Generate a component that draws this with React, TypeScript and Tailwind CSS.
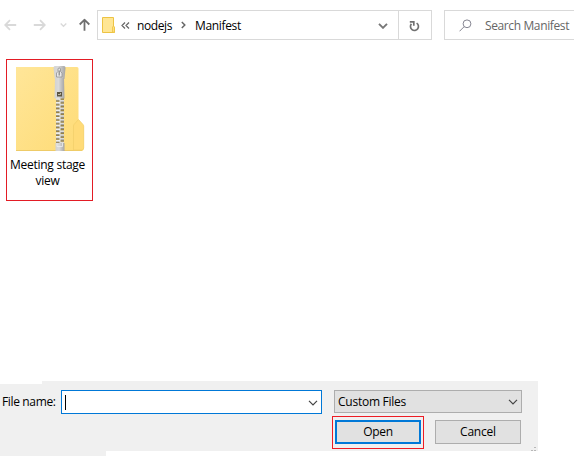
import React from "react";

function Chevron({ className = "", width = 1.2 }: { className?: string; width?: number }) {
  return (
    <svg className={className} width="10" height="6" viewBox="0 0 10 6" fill="none" stroke="currentColor" strokeWidth={width}>
      <path d="M1 .8 5 4.8 9 .8" />
    </svg>
  );
}

function ArrowIcon({ className = "" }: { className?: string }) {
  return (
    <svg className={className} width="13" height="12" viewBox="0 0 13 12" fill="none" stroke="currentColor" strokeWidth="1.8">
      <path d="M12.2 6H1.3M6 1.2 1.2 6 6 10.8" />
    </svg>
  );
}

function SmallFolder() {
  return (
    <svg width="13" height="16" viewBox="0 0 13 16">
      <path d="M.5.5h11v9.2l1 .8v5H.5z" fill="#ffe694" stroke="#edc343" />
      <path d="M10.5 15.2V10l1-1 1 1v5.2z" fill="#ffe07c" stroke="#edc343" strokeWidth=".8" />
    </svg>
  );
}

function ZipFolder() {
  const teeth = Array.from({ length: 12 }, (_, i) => 32 + i * 3.8);
  return (
    <svg className="ml-px" width="70" height="86" viewBox="0 0 70 86">
      <defs>
        <linearGradient id="folder" x1="0" y1="0" x2="1" y2="1">
          <stop offset="0" stopColor="#ffe699" />
          <stop offset="1" stopColor="#fedb75" />
        </linearGradient>
        <linearGradient id="metal" x1="0" x2="1">
          <stop offset="0" stopColor="#d2d2d2" />
          <stop offset=".4" stopColor="#dadada" />
          <stop offset="1" stopColor="#a4a4a4" />
        </linearGradient>
      </defs>
      <path d="M1 1h61q1.500 0 1.500 1.500V54l5 6v23q0 2-2 2H1z" fill="url(#folder)" />
      <path d="M1 84.500h66" stroke="#eecb68" />
      <path d="M58.500 84V60q0-1 .8-1.800L63.500 53.500l4.500 5q.7.8.7 1.800V82q0 2-2 2z" fill="#ffdb78" stroke="#f3cf6b" strokeWidth=".8" />
      <path d="M41 31h8v48h-8z" fill="#9a8344" />
      {teeth.map((y) => (
        <g key={y}>
          <path d={`M41 ${y}h4.500v2.300h-4.500z`} fill="#ededeb" />
          <path d={`M41 ${y + 1.8}h3.500v.8h-3.500z`} fill="#8d8a82" />
          <path d={`M44.500 ${y + 1.9}h4.500v2.300h-4.500z`} fill="#dcdcda" />
          <path d={`M45.500 ${y + 3.6}h3.500v.8h-3.500z`} fill="#817e76" />
        </g>
      ))}
      <path d="M40.500 77h9v8h-9z" fill="url(#metal)" />
      <path d="M42 77v3.500h5.500V77" fill="none" stroke="#eee" strokeWidth=".8" />
      <path d="M40 0h9q1.500 0 1.500 2l-1 11H39.800L38.500 2q0-2 1.500-2z" fill="url(#metal)" />
      <path d="M40 12h9l.5 20.500H39.500z" fill="url(#metal)" />
      <path d="M41.500 11V7l1.500-1.500V3q0-1 1.200-1t1.300 1v2.500L47 7v4z" fill="#e8e8e8" stroke="#929292" strokeWidth=".8" />
      <path d="M44.200 4.500v5" stroke="#858585" strokeWidth="1.200" />
      <path d="M42 26h5v4.500h-5z" fill="#5c5643" />
      <path d="M43 28.500h2.500v-1.500" fill="none" stroke="#bdb9a9" />
    </svg>
  );
}

export default function App() {
  return (
    <div className="flex h-[456px] w-[574px] flex-col overflow-hidden bg-white font-['Open_Sans','Noto_Sans',sans-serif] text-[12px] leading-[15px] text-black">
      <header className="flex h-[50px] shrink-0 items-start pt-[10px]">
        <nav className="flex h-[30px] w-[97px] shrink-0 items-center pl-1 text-[#d9d9d9]">
          <ArrowIcon />
          <ArrowIcon className="ml-[16px] rotate-180" />
          <Chevron className="ml-[14px] w-[7px]" width={1.8} />
          <ArrowIcon className="ml-[11px] rotate-90 text-[#6f6f6f]" />
        </nav>
        <div className="flex h-[30px] w-[335px] shrink-0 border border-[#d9d9d9]">
          <div className="flex w-[300px] items-center pl-1">
            <SmallFolder />
            <svg className="ml-[6px]" width="9" height="7" viewBox="0 0 9 7" fill="none" stroke="#666" strokeWidth="1.2">
              <path d="M4 .5 1 3.500 4 6.500M8 .5 5 3.500 8 6.500" />
            </svg>
            <span className="ml-[7px] w-[35px] whitespace-nowrap tracking-[-0.4px]">nodejs</span>
            <svg className="ml-[9px]" width="5" height="8" viewBox="0 0 5 8" fill="none" stroke="#666" strokeWidth="1.5">
              <path d="M.8 1 3.800 4 .8 7" />
            </svg>
            <span className="ml-[9px] whitespace-nowrap tracking-[-0.35px]">Manifest</span>
            <Chevron className="ml-auto mr-[10px] mt-[2px] text-[#777]" width={1.9} />
          </div>
          <button className="flex flex-1 items-center justify-center border-l border-[#d9d9d9] text-[#707070]">
            <svg className="mr-px mt-px" width="11" height="12" viewBox="0 0 11 12" fill="none" stroke="currentColor" strokeWidth="1.7">
              <path d="M2.400 3.900A4 4 0 1 0 7.600 3.100M.8 1.800h4v4" />
            </svg>
          </button>
        </div>
        <div className="ml-3 flex h-[30px] flex-1 items-center border border-r-0 border-[#d9d9d9] pl-[14px] text-[#666]">
          <svg width="13" height="13" viewBox="0 0 13 13" fill="none" stroke="#858591">
            <circle cx="8" cy="4.800" r="3.900" />
            <path d="M5.200 7.600.5 12.300" />
          </svg>
          <span className="ml-[13px] whitespace-nowrap tracking-[-0.38px]">Search Manifest</span>
        </div>
      </header>

      <main className="h-[331px] shrink-0 pl-[6px] pt-[9px]">
        <div className="flex h-[142px] w-[87px] flex-col items-center border border-[#e31c25] pt-[6px]">
          <ZipFolder />
          <div className="mr-[4px] mt-[5px] w-[80px] whitespace-nowrap text-center leading-4 tracking-[-0.25px]">
            <div>Meeting stage</div>
            <div>view</div>
          </div>
        </div>
      </main>

      <footer className="flex flex-col">
        <div className="ml-[42px] h-[3px] w-[496px] bg-[#f0f0f0]" />
        <div className="flex h-[67px] w-[538px] bg-[#f0f0f0] pt-[6px]">
          <label className="w-[61px] whitespace-nowrap pl-[2px] pt-[4px] tracking-[-0.35px]">File name:</label>
          <div className="flex h-6 w-[261px] items-center justify-between border border-[#0078d7] bg-white pl-[3px] pr-[3px]">
            <span className="h-[15px] w-px bg-black" />
            <Chevron className="mt-[2px] text-[#444]" />
          </div>
          <div className="ml-[10px] flex w-[190px] flex-col">
            <div className="ml-[2px] flex h-[23px] w-[188px] items-center justify-between border border-[#adadad] bg-[#e1e1e1] pl-[3px] pr-[3px]">
              <span className="whitespace-nowrap tracking-[-0.25px]">Custom Files</span>
              <Chevron className="text-[#444]" />
            </div>
            <div className="mt-[3px] flex items-start">
              <div className="h-[33px] w-[92px] shrink-0 border border-[#ed1c24] pl-[2px] pt-[3px]">
                <button className="flex h-6 w-[86px] items-center justify-center border-2 border-[#0078d7] bg-[#e1e1e1] pb-px tracking-[-0.3px]">Open</button>
              </div>
              <button className="ml-[11px] mt-[4px] flex h-6 w-[86px] shrink-0 items-center justify-center border border-[#adadad] bg-[#e1e1e1] pb-px tracking-[-0.2px]">Cancel</button>
            </div>
          </div>
          <svg className="ml-auto mr-[2px] self-end" width="5" height="4" viewBox="0 0 5 4" fill="#b8b8b8">
            <path d="M3 0h2v1H3zM0 3h2v1H0zM3 3h2v1H3z" />
          </svg>
        </div>
        <div className="h-[5px] w-[106px] bg-[#f0f0f0]" />
      </footer>
    </div>
  );
}
